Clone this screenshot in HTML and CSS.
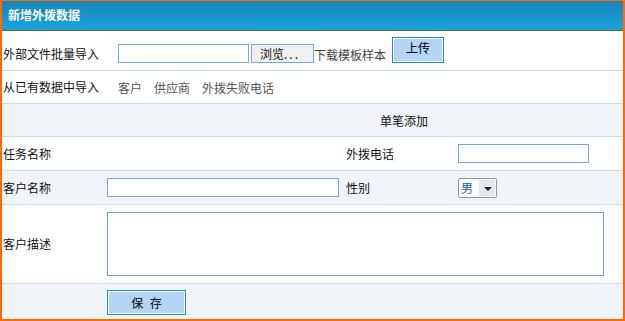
FILE: index.html
```html
<!DOCTYPE html>
<html lang="zh">
<head>
<meta charset="utf-8">
<title>新增外拨数据</title>
<link rel="stylesheet" href="styles.css">
</head>
<body>
<div class="panel">
  <div class="title">新增外拨数据</div>

  <div class="row row-file">
    <div class="label wide">外部文件批量导入</div>
    <div class="file-input"></div>
    <button class="browse" type="button">浏览<span class="dots">...</span></button>
    <span class="download">下载模板样本</span>
    <button class="btn upload" type="button">上传</button>
  </div>

  <div class="row row-source">
    <div class="label wide">从已有数据中导入</div>
    <div class="links">
      <span>客户</span>
      <span>供应商</span>
      <span>外拨失败电话</span>
    </div>
  </div>

  <div class="row row-section alt">
    <div class="section-title">单笔添加</div>
  </div>

  <div class="row grid r33">
    <div class="label">任务名称</div>
    <div></div>
    <div class="label">外拨电话</div>
    <div><div class="text-input phone"></div></div>
  </div>

  <div class="row grid r33 alt">
    <div class="label">客户名称</div>
    <div><div class="text-input name"></div></div>
    <div class="label">性别</div>
    <div>
      <div class="select"><span class="sel-val">男</span><span class="sel-arrow"></span></div>
    </div>
  </div>

  <div class="row grid r78">
    <div class="label">客户描述</div>
    <div class="span3"><div class="textarea"></div></div>
  </div>

  <div class="row grid r35 alt last">
    <div></div>
    <div><button class="btn save" type="button">保 存</button></div>
  </div>
</div>
</body>
</html>
```

FILE: styles.css
```css
html, body {
  margin: 0;
  padding: 0;
  background: #fff;
}
body {
  font-family: "Noto Sans CJK SC", "DejaVu Sans", sans-serif;
  font-size: 12px;
  color: #111;
}
.panel {
  width: 621px;
  height: 318px;
  border: 2px solid #ff6a00;
  border-top-width: 1px;
  overflow: hidden;
}
.title {
  height: 29px;
  border-bottom: 1px solid #4f6a2e;
  background: linear-gradient(#1784b8, #1aa4dd);
  color: #fff;
  font-weight: bold;
  font-size: 12px;
  line-height: 27px;
  padding-left: 6px;
}
.row {
  border-bottom: 1px solid #c3dcef;
  box-sizing: border-box;
}
.row.last { border-bottom: none; }
.alt { background: #f0f4f8; }
.label {
  padding-left: 1px;
  line-height: 18px;
  white-space: nowrap;
}
.label.wide { width: 114px; flex: none; }

.row-file {
  height: 40px;
  display: flex;
  align-items: flex-end;
  padding-bottom: 7px;
}
.file-input {
  width: 129px;
  height: 17px;
  border: 1px solid #7aa7d8;
  background: #fff;
  margin-left: 1px;
}
.browse {
  margin: 0 0 0 2px;
  width: 63px;
  height: 19px;
  padding: 0 0 0 8px;
  text-align: left;
  border: 1px solid #7aa7d8;
  background: #f0f0f0;
  font: inherit;
  line-height: 16px;
  color: #111;
}
.dots { letter-spacing: 2px; }
.download {
  color: #444;
  line-height: 16px;
}
.btn {
  font: inherit;
  color: #000;
  background: #b4d5f5;
  border: 1px solid #1c90c4;
  box-shadow: inset 0 0 0 1px #fff;
  padding: 0;
}
.upload {
  width: 52px;
  height: 26px;
  margin-left: 6px;
  line-height: 20px;
  padding-bottom: 4px;
}

.row-source {
  height: 33px;
  display: flex;
  align-items: center;
}
.links {
  display: flex;
  gap: 12px;
  color: #555;
  margin-left: 1px;
}

.row-section {
  height: 33px;
  display: flex;
  align-items: center;
  padding-left: 378px;
}

.grid {
  display: grid;
  grid-template-columns: 105px 238px 113px 1fr;
  align-items: center;
}
.r33 { height: 34px; }
.r78 { height: 79px; }
.r35 { height: 35px; }
.span3 { grid-column: 2 / 5; }

.text-input {
  height: 17px;
  border: 1px solid #7aa7d8;
  background: #fff;
}
.phone { width: 129px; }
.name { width: 230px; }
.textarea {
  width: 495px;
  height: 62px;
  border: 1px solid #6aa0d4;
  background: #fff;
}

.select {
  width: 37px;
  height: 18px;
  border: 1px solid #8a9aaa;
  border-radius: 2px;
  background: #fff;
  display: flex;
  align-items: stretch;
  margin-top: 1px;
}
.sel-val {
  color: #0a64b4;
  line-height: 18px;
  padding-left: 2px;
  width: 18px;
}
.sel-arrow {
  flex: 1;
  background: #e4e8ec;
  margin: 1px 1px 1px 0;
  position: relative;
}
.sel-arrow::after {
  content: "";
  position: absolute;
  left: 5px;
  top: 7px;
  border-left: 4px solid transparent;
  border-right: 4px solid transparent;
  border-top: 4px solid #10204a;
}

.save {
  width: 79px;
  height: 25px;
  line-height: 21px;
  margin-top: 1px;
  word-spacing: 4px;
}
```
